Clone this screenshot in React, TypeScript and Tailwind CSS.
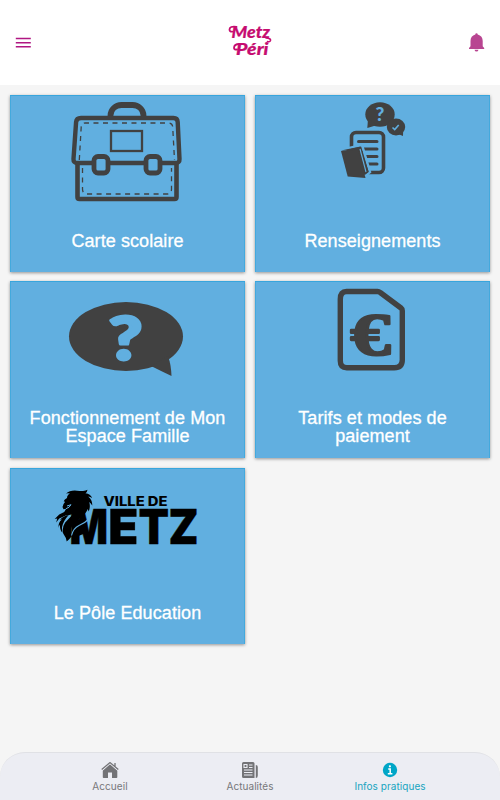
import type { ReactNode } from 'react';

function Briefcase() {
  return (
    <svg className="block h-[114px] w-[235px]" viewBox="10 95 235 114" fill="none" stroke="#414141">
      <path d="M110.500 117v-1.500c0-6 5-10.500 11-10.500h11c6 0 11 4.500 11 10.500v1.500" strokeWidth="5.800" />
      <path d="M77.500 163.500v33.500q0 2 2 2h95q2 0 2-2v-33.500" strokeWidth="4.600" />
      <path d="M81 118h92.500q4 0 4.200 4l1.800 37q.2 4-4 4H77.500q-4.200 0-4-4l2.600-37q.3-4 4.900-4Z" strokeWidth="4.400" />
      <rect x="111" y="131" width="31" height="20" strokeWidth="2.300" />
      <path d="M79.300 160l1.900-33q.3-4 4.300-4h83q4 0 4.200 4l1.800 33" strokeWidth="1.300" strokeDasharray="5 4.500" />
      <path d="M82.500 168v21q0 5 5 5h79q5 0 5-5v-21" strokeWidth="1.300" strokeDasharray="5 4.500" />
      <rect x="94" y="156.500" width="14" height="16.500" rx="4" strokeWidth="4.800" fill="#61afe0" />
      <rect x="146" y="156.500" width="14" height="16.500" rx="4" strokeWidth="4.800" fill="#61afe0" />
    </svg>
  );
}

function Information() {
  return (
    <svg className="block h-[114px] w-[235px]" viewBox="255 95 235 114" fill="#414141">
      <ellipse cx="380" cy="114.500" rx="14.700" ry="12.200" />
      <path d="M368 119l-.7 9 10-3Z" />
      <ellipse cx="396" cy="127" rx="9.200" ry="8.500" />
      <path d="M398 134l5 2 .2-7Z" />
      <text x="380" y="121.300" textAnchor="middle" fontSize="19" fill="#61afe0" className="font-['Lato'] font-black">?</text>
      <path d="M392.500 127.500l2.200 2 4-4.500" fill="none" stroke="#61afe0" strokeWidth="1.600" />
      <rect x="351.500" y="132.500" width="32" height="40" rx="4.500" fill="none" stroke="#414141" strokeWidth="3.600" />
      <path d="M358.500 141.500H377M363 149h14M364 156.500h13M366 164h11" fill="none" stroke="#414141" strokeWidth="3" strokeLinecap="round" />
      <path d="M345 149l17-4 8 27-5 4-15-1Z" stroke="#61afe0" strokeWidth="2.500" />
      <path d="M341 150.500l19.500-4 8.200 25.500-4 3-2-24Z" />
      <path d="M341 151l17-1.500 7.500 28.500-17.800-1.500Z" />
      <path d="M360 149l6 23" fill="none" stroke="#61afe0" strokeWidth="1.100" />
    </svg>
  );
}

function QuestionBubble() {
  return (
    <svg className="block h-[114px] w-[235px]" viewBox="10 281 235 114" fill="#414141">
      <ellipse cx="126" cy="336.500" rx="57" ry="34.500" />
      <path d="M151 366q10 5 20.500 10-.3-11-3.500-20Z" />
      <text x="125.500" y="359.500" textAnchor="middle" fontSize="61" textLength="34" lengthAdjust="spacingAndGlyphs" fill="#61afe0" stroke="#61afe0" strokeWidth="2.900" strokeLinejoin="round" className="font-['Lato'] font-black">?</text>
    </svg>
  );
}

function EuroDocument() {
  return (
    <svg className="block h-[114px] w-[235px]" viewBox="255 281 235 114" fill="#414141">
      <path d="M346.500 291.500h31q1.500 0 2.700 1L401 308q1.300 1 1.300 2.800v49q0 8-8 8h-47.500q-6.500 0-6.500-7v-61.500q0-7.800 6.200-7.800Z" fill="none" stroke="#414141" strokeWidth="5.400" strokeLinejoin="round" />
      <text x="370.500" y="354.500" textAnchor="middle" fontSize="62" textLength="40.500" lengthAdjust="spacingAndGlyphs" stroke="#414141" strokeWidth="2.200" strokeLinejoin="round" className="font-['Liberation_Serif'] font-bold">€</text>
    </svg>
  );
}

function CityLogo() {
  return (
    <svg className="block h-[114px] w-[235px]" viewBox="10 468 235 114" fill="#000">
      <path d="M62.500 507q.5-3 2.500-5-1-1-1.500-.5 1-2.500 3.500-3.500 0-3 3-4.500-2-.6-4 0 4-3.500 11-2.800 4 .5 6 .3 3-.3 4.500-1.200-.3 2.500-2 3.500 5 .7 6.700 4.700-2-1.500-4-1.500 4.500 4 4 9-1.300-2.500-3-3.500 1.500 4.500-.5 9.500l-1-2.500q-1.700 5-7 8.500-6.500 4-9 9.500-1.500 3 .5 8.500-2 3-5.500 6-.5-4-3.500-8-1.500-6 2-11 6-6.500 11-11.500-5 4.500-10.500 4.500l-6.500 3-3 4 1-4-2.500.5 4.500-4.500 5-2.500 2-3.200-2.700.4Z" />
      <path d="M58.500 528q-.5-6 3.500-8.500l-2 .3q4-4.300 8.500-4.500-5.500 6-6.500 12 0 3 .5 5.500-3-3-2.500-8-1.500 1.500-1.500 3.200Z" />
      <path d="M67 506l4-1.300q-1.500 3-5 4" fill="none" stroke="#61afe0" strokeWidth="1" />
      <path d="M72 543.800v-13q2-8 8-12h4v15l-5 2v8Z" />
      <text x="103.500" y="506" fontSize="12.800" textLength="64" lengthAdjust="spacingAndGlyphs" className="font-['Inter'] font-extrabold">VILLE DE</text>
      <text y="543.800" fontSize="48" stroke="#000" strokeWidth=".4" className="font-['Inter'] font-black">
        <tspan x="69.500" textLength="38.500" lengthAdjust="spacingAndGlyphs">M</tspan><tspan x="108.300" textLength="30" lengthAdjust="spacingAndGlyphs">E</tspan><tspan x="138.500" textLength="30.500" lengthAdjust="spacingAndGlyphs">T</tspan><tspan x="168.500" textLength="30" lengthAdjust="spacingAndGlyphs">Z</tspan>
      </text>
      <path d="M90 518q-5 5-11 7.500-6 3-7.500 10" fill="none" stroke="#61afe0" strokeWidth="1.100" />
    </svg>
  );
}

function Card({ label, children }: { label: ReactNode; children: ReactNode }) {
  return (
    <section className="flex h-[176.500px] flex-col bg-[#61afe0] shadow-[inset_0_1px_0_#38a5dc,inset_1px_0_0_#43a9dd,inset_-1px_0_0_#43a9dd,0_1px_3px_rgba(0,0,0,0.4)]">
      {children}
      <h2 className="flex h-[62px] items-center justify-center pt-[3px] text-center text-[18px] leading-[17.500px] font-normal tracking-[0.080px] text-white [-webkit-text-stroke:0.300px_white]">
        <span>{label}</span>
      </h2>
    </section>
  );
}

export default function App() {
  return (
    <div className="flex h-[800px] w-[500px] flex-col overflow-hidden bg-[#f5f5f5] font-['Liberation_Sans',sans-serif]">
      <header className="flex h-[85px] items-center justify-between bg-white px-[15px]">
        <svg className="h-[12px] w-[16px]" viewBox="0 0 16 12" fill="none" stroke="#b01782" strokeWidth="1.400">
          <path d="M.8 1.500h15M.8 5.700h15M.8 9.800h15" />
        </svg>
        <svg className="h-[40px] w-[50px]" viewBox="225 22.5 50 40" fill="#c60c70">
          <text x="231.500" y="37.500" fontSize="17" textLength="38.500" lengthAdjust="spacingAndGlyphs" stroke="#c60c70" strokeWidth=".2" className="font-['Lato'] font-black italic">Metz</text>
          <text x="236" y="54.500" fontSize="16.500" textLength="32.500" lengthAdjust="spacingAndGlyphs" stroke="#c60c70" strokeWidth=".2" className="font-['Lato'] font-black italic">Péri</text>
          <path d="M236.500 26.300q-7-1-7 2.800 0 2.300 2.800 2M239.500 43.500q-5.500 0-5.500 4 .3 2 3 1.500" fill="none" stroke="#c60c70" strokeWidth="1.800" strokeLinecap="round" />
          <path d="M266 37.500q5 .3 4.500 2.500-.6 1.800-3 1" fill="none" stroke="#c60c70" strokeWidth="1.600" strokeLinecap="round" />
        </svg>
        <svg className="h-[20px] w-[17px]" viewBox="468 32.5 17 20" fill="#b84591">
          <path d="M475.300 34q0-1.300 1.200-1.300t1.200 1.300c3.300.8 5 3.300 5 6.600v5.200l1.500 1.700v1H469v-1l1.500-1.700v-5.200c0-3.300 1.700-5.800 4.800-6.600ZM474.500 49.200h4q-.4 1.900-2 1.900t-2-1.900Z" />
        </svg>
      </header>

      <main className="grid flex-1 grid-cols-2 content-start gap-x-[10px] gap-y-[9.800px] px-[10px] pt-[10px]">
        <Card label="Carte scolaire"><Briefcase /></Card>
        <Card label="Renseignements"><Information /></Card>
        <Card label={<>Fonctionnement de Mon<br />Espace Famille</>}><QuestionBubble /></Card>
        <Card label={<>Tarifs et modes de<br />paiement</>}><EuroDocument /></Card>
        <Card label="Le Pôle Education"><CityLogo /></Card>
      </main>

      <nav className="grid h-[48px] grid-cols-[140px_140px_140px] justify-center rounded-t-[25px] border-t border-[#e0e1e5] bg-[#ecedf3] pt-[9px] font-['Inter',sans-serif] text-[10px] leading-[14px] tracking-[0.050px] text-[#77777a]">
        <div className="flex flex-col items-center">
          <svg className="h-[17px] w-[18px]" viewBox="101 762 18 17" fill="#737376">
            <path d="M102.800 770.500l7.200-6.500 7.300 6.500v6.700q0 .8-.8.800H112v-5.500h-4v5.500h-4.400q-.8 0-.8-.8Z" />
            <path d="M101.700 769.700l8.300-7.200 8.300 7.200" fill="none" stroke="#ecedf3" strokeWidth="2.600" />
            <path d="M101.700 769.500l8.300-6.900 8.300 6.900M115 763v4" fill="none" stroke="#737376" strokeWidth="1.300" />
          </svg>
          <span>Accueil</span>
        </div>
        <div className="flex flex-col items-center">
          <svg className="h-[17px] w-[18px]" viewBox="241 762 18 17" fill="#737376">
            <path d="M243.500 762h9.500q1.500 0 1.500 1.500V778h-11q-1.500 0-1.500-1.500v-13q0-1.500 1.500-1.500ZM255.800 765q2 0 2 2v8.500q0 2.500-2 2.500Z" />
            <path d="M244 764.500h3v3h-3ZM249 765h3.500M249 767.500h3.500M244 770h8.500M244 772.500h8.500M244 775h8.500" fill="none" stroke="#ecedf3" strokeWidth="1.100" />
          </svg>
          <span>Actualités</span>
        </div>
        <div className="flex flex-col items-center text-[#17a4bf]">
          <svg className="h-[17px] w-[18px]" viewBox="381 762 18 17">
            <circle cx="390" cy="770" r="7.200" fill="#00a6c7" />
            <path d="M388.200 769h2v4.200M387.800 773.800h4.600" fill="none" stroke="#fff" strokeWidth="1.500" />
            <circle cx="389.900" cy="766.300" r="1.100" fill="#fff" />
          </svg>
          <span>Infos pratiques</span>
        </div>
      </nav>
    </div>
  );
}
